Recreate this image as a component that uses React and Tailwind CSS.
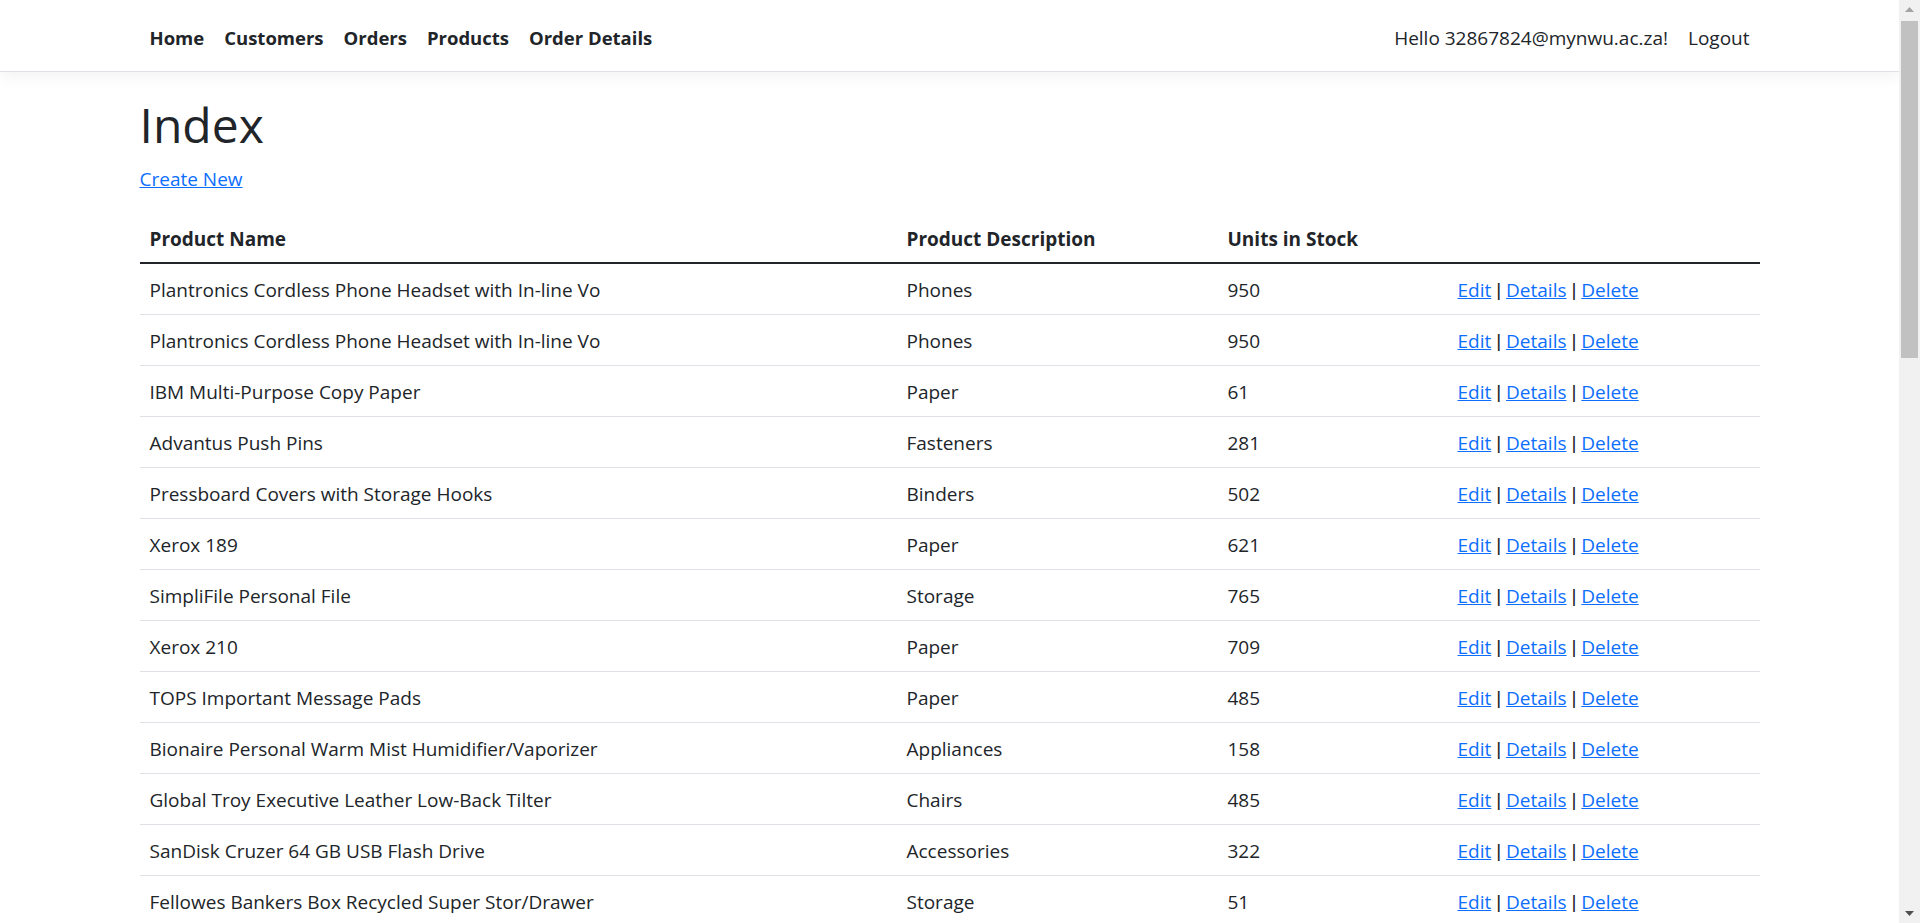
import React from 'react';

const products = [
  { name: 'Plantronics Cordless Phone Headset with In-line Vo', description: 'Phones', stock: 950 },
  { name: 'Plantronics Cordless Phone Headset with In-line Vo', description: 'Phones', stock: 950 },
  { name: 'IBM Multi-Purpose Copy Paper', description: 'Paper', stock: 61 },
  { name: 'Advantus Push Pins', description: 'Fasteners', stock: 281 },
  { name: 'Pressboard Covers with Storage Hooks', description: 'Binders', stock: 502 },
  { name: 'Xerox 189', description: 'Paper', stock: 621 },
  { name: 'SimpliFile Personal File', description: 'Storage', stock: 765 },
  { name: 'Xerox 210', description: 'Paper', stock: 709 },
  { name: 'TOPS Important Message Pads', description: 'Paper', stock: 485 },
  { name: 'Bionaire Personal Warm Mist Humidifier/Vaporizer', description: 'Appliances', stock: 158 },
  { name: 'Global Troy Executive Leather Low-Back Tilter', description: 'Chairs', stock: 485 },
  { name: 'SanDisk Cruzer 64 GB USB Flash Drive', description: 'Accessories', stock: 322 },
  { name: 'Fellowes Bankers Box Recycled Super Stor/Drawer', description: 'Storage', stock: 51 },
  { name: 'Avery Non-Stick Binders', description: 'Binders', stock: 412 },
  { name: 'Newell 322', description: 'Art', stock: 238 },
  { name: 'Wilson Jones Active Use Binders', description: 'Binders', stock: 877 },
  { name: 'Logitech Wireless Gaming Headset G930', description: 'Accessories', stock: 73 },
  { name: 'Memorex Micro Travel Drive 16 GB', description: 'Accessories', stock: 356 },
];

const navLinks = ['Home', 'Customers', 'Orders', 'Products', 'Order Details'];

function NavBar() {
  return (
    <nav className="bg-white border-b border-[#dee2e6] shadow-[0_5px_15px_rgba(0,0,0,0.05)] mb-[20px]">
      <div className="mx-auto w-[1650px] px-[15px] py-[10px] flex items-center justify-between">
        <ul className="flex">
          {navLinks.map((label) => (
            <li key={label}>
              <a href="#" className="block px-[10px] pt-[13px] pb-[8px] text-[18.5px] font-bold text-[#212529]">
                {label}
              </a>
            </li>
          ))}
        </ul>
        <ul className="flex">
          <li>
            <span className="block px-[10px] pt-[13px] pb-[8px] text-[#212529]">Hello 32867824@mynwu.ac.za!</span>
          </li>
          <li>
            <a href="#" className="block px-[10px] pt-[13px] pb-[8px] text-[#212529]">Logout</a>
          </li>
        </ul>
      </div>
    </nav>
  );
}

// window scrollbar, as in the screenshot
function ScrollBar() {
  return (
    <div className="sticky top-0 w-[21px] h-[923px] shrink-0 bg-[#f1f1f1] flex flex-col items-center">
      <div className="h-[19px] w-full flex items-center justify-center">
        <svg width="9" height="5" viewBox="0 0 9 5"><path d="M0 5 L4.5 0 L9 5 Z" fill="#a3a3a3" /></svg>
      </div>
      <div className="mt-[2px] w-[17px] h-[337px] bg-[#c1c1c1]" />
      <div className="flex-1" />
      <div className="h-[19px] w-full flex items-center justify-center">
        <svg width="9" height="5" viewBox="0 0 9 5"><path d="M0 0 L4.5 5 L9 0 Z" fill="#505050" /></svg>
      </div>
    </div>
  );
}

// narrow pipe, Open Sans draws it too wide
function Sep() {
  return <span className="inline-block align-top h-[30px] leading-[30px] font-['Liberation_Sans',sans-serif]">|</span>;
}

export default function App() {
  return (
    <div className="flex items-start bg-white font-['Open_Sans',sans-serif] text-[19px] leading-[30px] text-[#212529]">
      <div className="flex-1 min-w-0">
        <NavBar />
        <div className="mx-auto w-[1650px] px-[15px]">
          <main role="main" className="pb-[20px]">
            <h1 className="text-[48px] leading-[60px] font-medium pt-[3px] mb-[7px]">Index</h1>
            <p className="pt-[2px] mb-[18px]">
              <a href="#" className="text-[#0d6efd] underline">Create New</a>
            </p>
            <table className="w-full table-fixed border-collapse mb-[20px]">
              <thead>
                <tr>
                  <th className="w-[757px] text-left font-bold px-[10px] pt-[12px] pb-[8px] border-b-2 border-[#212529]">Product Name</th>
                  <th className="w-[321px] text-left font-bold px-[10px] pt-[12px] pb-[8px] border-b-2 border-[#212529]">Product Description</th>
                  <th className="w-[230px] text-left font-bold px-[10px] pt-[12px] pb-[8px] border-b-2 border-[#212529]">Units in Stock</th>
                  <th className="text-left px-[10px] pt-[12px] pb-[8px] border-b-2 border-[#212529]"></th>
                </tr>
              </thead>
              <tbody>
                {products.map((p, i) => (
                  <tr key={i} className="border-b border-[#dee2e6]">
                    <td className="px-[10px] pt-[11px] pb-[9px]">{p.name}</td>
                    <td className="px-[10px] pt-[11px] pb-[9px]">{p.description}</td>
                    <td className="px-[10px] pt-[11px] pb-[9px]">{p.stock}</td>
                    <td className="px-[10px] pt-[11px] pb-[9px]">
                      <a href="#" className="text-[#0d6efd] underline">Edit</a> <Sep />{' '}
                      <a href="#" className="text-[#0d6efd] underline">Details</a> <Sep />{' '}
                      <a href="#" className="text-[#0d6efd] underline">Delete</a>
                    </td>
                  </tr>
                ))}
              </tbody>
            </table>
          </main>
        </div>
      </div>
      <ScrollBar />
    </div>
  );
}
